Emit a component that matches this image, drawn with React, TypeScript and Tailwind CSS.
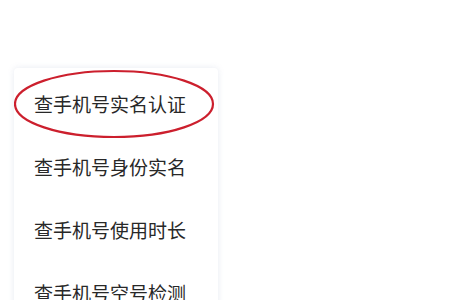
export default function App() {
  const items = ["查手机号实名认证", "查手机号身份实名", "查手机号使用时长", "查手机号空号检测"]
  return (
    <div
      className="w-[450px] h-[300px] overflow-hidden bg-white pt-[68px] pl-[14px]"
      style={{ fontFamily: '"Noto Sans CJK SC", "Noto Sans", sans-serif' }}
    >
      <div className="relative w-[204px] bg-white pt-[4px] rounded-sm shadow-[0_0_6px_rgba(120,140,180,0.18)]">
        {items.map((t) => (
          <div key={t} className="h-[63px] flex items-center pl-[20px] text-[19px] text-[#282828] leading-none">
            {t}
          </div>
        ))}
        {/* red circle mark */}
        <svg className="absolute left-0 top-[1px]" width="202" height="70" viewBox="0 0 202 70" fill="none">
          <ellipse cx="100" cy="35" rx="99" ry="33" stroke="#cc1f2d" strokeWidth="2.2" />
        </svg>
      </div>
    </div>
  )
}
